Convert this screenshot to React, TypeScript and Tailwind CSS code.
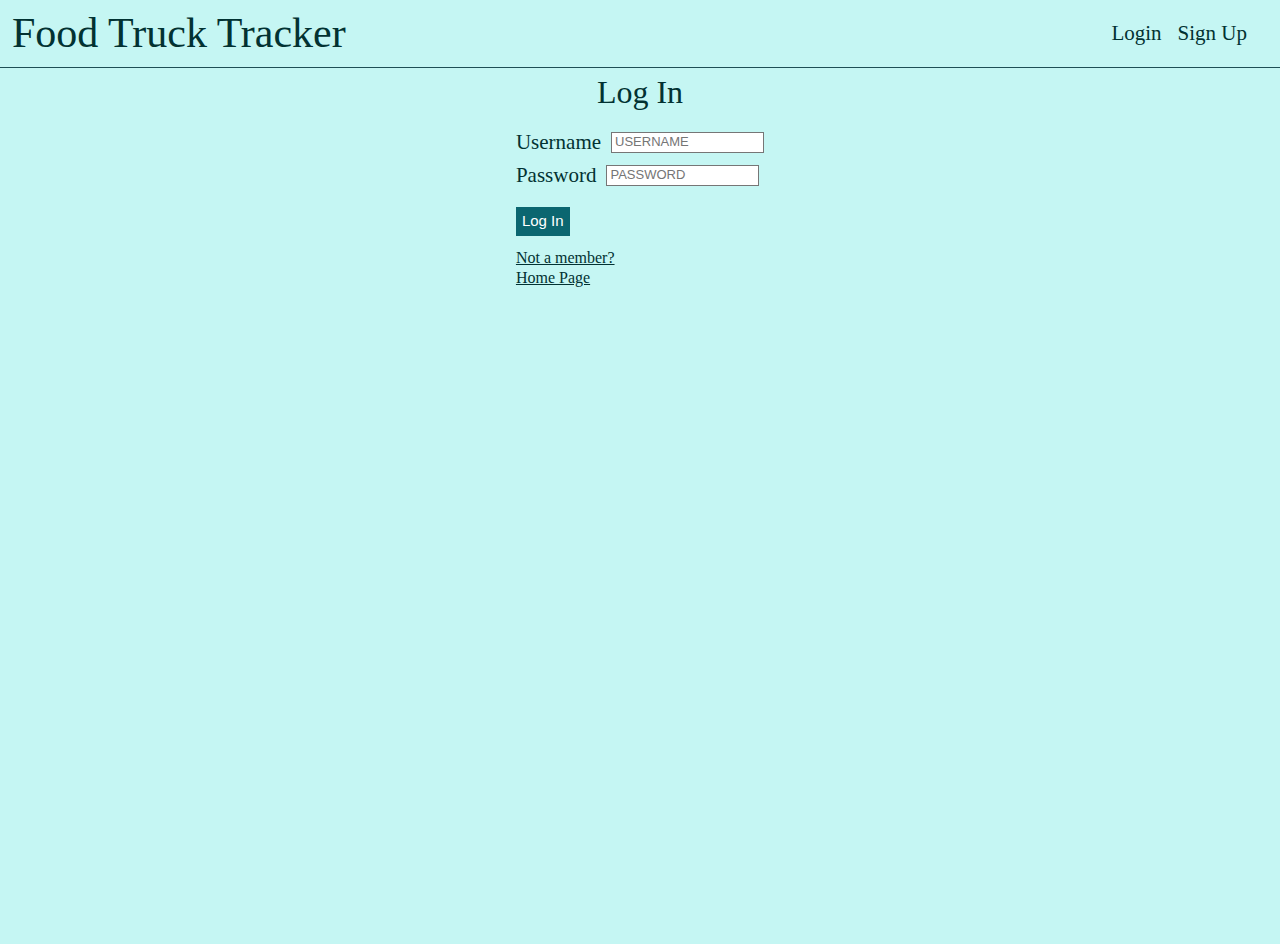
export default function App() {
  return (
    <div className="min-h-[944px] bg-[#c5f6f3] text-[#023232] font-['Liberation_Serif',serif]">
      <header className="flex h-[68px] items-center justify-between border-b border-[#1e4f55] pl-3 pr-[33px]">
        <h1 className="text-[42px] leading-none pb-[2px]">Food Truck Tracker</h1>
        <nav className="flex gap-4 text-[21px]">
          <a href="#">Login</a>
          <a href="#">Sign Up</a>
        </nav>
      </header>
      <main className="flex flex-col items-center">
        <h2 className="mt-[4px] text-[32px] leading-[40px]">Log In</h2>
        <form className="mt-[17px] flex flex-col items-start">
          <label className="flex items-center gap-[10px] text-[21px] leading-[26px]">
            Username
            <input
              type="text"
              placeholder="USERNAME"
              className="h-[21px] w-[153px] border border-[#767676] bg-white px-[3px] font-['Liberation_Sans',sans-serif] text-[13px] placeholder:text-[#757575]"
            />
          </label>
          <label className="mt-[7px] flex items-center gap-[10px] text-[21px] leading-[26px]">
            Password
            <input
              type="password"
              placeholder="PASSWORD"
              className="h-[21px] w-[153px] border border-[#767676] bg-white px-[3px] font-['Liberation_Sans',sans-serif] text-[13px] placeholder:text-[#757575]"
            />
          </label>
          <button
            type="button"
            className="mt-[19px] h-[29px] bg-[#0b6670] px-[6px] font-['Liberation_Sans',sans-serif] text-[15px] text-white"
          >
            Log In
          </button>
          <div className="mt-[12px] flex flex-col text-[16px] leading-[20px]">
            <a href="#" className="underline">Not a member?</a>
            <a href="#" className="underline">Home Page</a>
          </div>
        </form>
      </main>
    </div>
  )
}
